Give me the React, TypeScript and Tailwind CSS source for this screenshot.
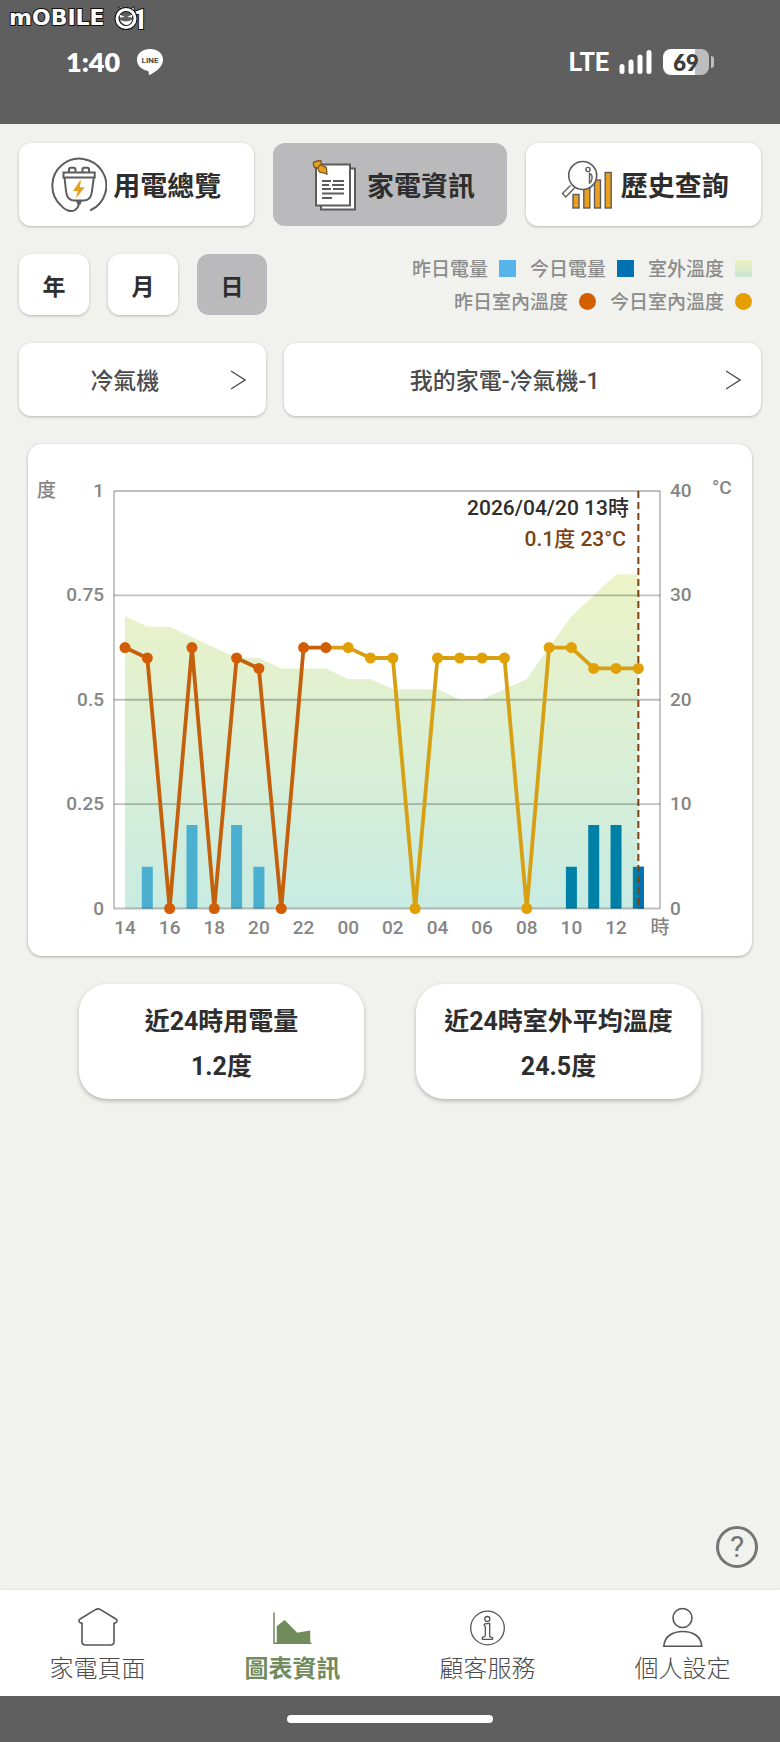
import React, { useState } from "react";
import clsx from "clsx";

const OUTDOOR = [
  28, 27, 27, 26, 25, 24, 24, 23, 23, 23, 22, 22, 21, 21, 21, 20, 20, 21, 22,
  25, 28, 30, 32, 32,
];
const INDOOR = [
  25, 24, 0, 25, 0, 24, 23, 0, 25, 25, 25, 24, 24, 0, 24, 24, 24, 24, 0, 25, 25,
  23, 23, 23,
];
const USAGE = [
  0, 0.1, 0, 0.2, 0, 0.2, 0.1, 0, 0, 0, 0, 0, 0, 0, 0, 0, 0, 0, 0, 0, 0.1, 0.2,
  0.2, 0.1,
];
const HOURS = [
  "14", "16", "18", "20", "22", "00", "02", "04", "06", "08", "10", "12",
];
const AXIS = [
  { kwh: "1", temp: 40 },
  { kwh: "0.75", temp: 30 },
  { kwh: "0.5", temp: 20 },
  { kwh: "0.25", temp: 10 },
  { kwh: "0", temp: 0 },
];

// first index that belongs to today
const TODAY = 10;

const LEFT = 86;
const RIGHT = 632;
const TOP = 47;
const BOTTOM = 464.5;

const px = (i: number) => 97 + i * 22.32;
const py = (temp: number) => BOTTOM - (temp / 40) * (BOTTOM - TOP);

const PlugIcon = () => (
  <svg viewBox="0 0 56 56" className="size-14 shrink-0" fill="none" stroke="#5c5c5c" strokeWidth="2">
    <path d="M40 53A27 27 0 1 0 10 48.500C14 53.500 20 55.500 24 53C27 51 28 48.500 28 45" strokeLinecap="round" />
    <path d="M18 15V12.500Q18 10.800 19.700 10.800H22.800Q24.500 10.800 24.500 12.500V15M31.500 15V12.500Q31.500 10.800 33.200 10.800H36.300Q38 10.800 38 12.500V15" />
    <path d="M12.500 15.500H43.700V20.500H12.500Z" />
    <path d="M13.500 20.500L15 34Q16 43.500 23 43.500H33Q40 43.500 41 34L42.800 20.500" />
    <path d="M25 44H31L29.500 47.500H26.500Z" fill="#5c5c5c" stroke="none" />
    <path d="M29 23.500L22 34H26.800L24.800 41.500L33.800 30.300H28.800L30 23.500Z" fill="#e9a020" stroke="none" />
  </svg>
);

const DocumentIcon = () => (
  <svg viewBox="0 0 56 56" className="size-14 shrink-0" fill="none" stroke="#5c5c5c" strokeWidth="2">
    <path d="M16 49V52.500H50V11.500H45" fill="#fff" />
    <path d="M11 7.500H45V48.500H11Z" fill="#fff" />
    <path d="M17 24H26M28 24H39M17 28H24M27 28H39M17 32H26M28 32H39M17 36.500H39M17 41H27" />
    <path
      d="M8.500 8Q7.500 5 10.500 4.500L14.500 3.500Q17 3.500 16 6L15.800 7.500L19 9.500Q21.800 9.500 21.500 12L22 17L17 15.500Q14 16 13.500 13L12.500 10.800L10.500 10.500Q9 10.500 8.500 8Z"
      fill="#e9a020"
      stroke="#7a5a2a"
      strokeWidth="1.300"
    />
    <path d="M15.800 7.500L12.500 10.800" stroke="#7a5a2a" strokeWidth="1.300" />
  </svg>
);

const HistoryIcon = () => (
  <svg viewBox="0 0 56 56" className="size-14 shrink-0" stroke="#5c5c5c" strokeWidth="1.400">
    <g fill="#e9a020">
      <rect x="14" y="37.500" width="6" height="13.500" />
      <rect x="24.800" y="30" width="6" height="21" />
      <rect x="35.500" y="23" width="6" height="28" />
      <rect x="46.200" y="15.500" width="6" height="35.500" />
    </g>
    <path d="M11.500 28.500L3.500 36.500L6.800 40L15.500 31" fill="#fff" strokeWidth="1.400" />
    <circle cx="23.700" cy="18.500" r="14" fill="#fff" strokeWidth="1.600" />
    <circle cx="29" cy="12.500" r="2.100" fill="none" />
    <path d="M30.500 16.500Q33.500 17.500 33 21.500Q32.500 25 30.500 26Z" fill="none" />
  </svg>
);

const HomeIcon = () => (
  <svg viewBox="0 0 40 40" className="size-10" fill="none" stroke="#555" strokeWidth="1.600" strokeLinejoin="round">
    <path d="M4 16V34.500Q4 38 7.500 38H32.500Q36 38 36 34.500V16H37.500Q40.500 13.500 37.500 11.800L22.500 2.600Q20 1.200 17.500 2.600L2.500 11.800Q-0.500 13.500 2.500 16Z" />
  </svg>
);

const ChartIcon = () => (
  <svg viewBox="0 0 40 40" className="size-10" fill="#718b5c" stroke="#718b5c" strokeWidth="1.500">
    <path d="M1 5.500V36.300H38.500" fill="none" />
    <path d="M4.500 19.500L11.500 14L24 26.500L36.500 24.500V36H4.500Z" />
  </svg>
);

const InfoIcon = () => (
  <svg viewBox="0 0 40 40" className="size-10" fill="none" stroke="#555" strokeWidth="1.300">
    <circle cx="19.500" cy="21" r="16.800" />
    <circle cx="19.300" cy="12" r="2.500" />
    <path d="M16.800 16.800L21.700 16.300V29Q21.700 30.300 24 30.300Q25 30.500 24.500 32.300H14.300Q13.800 30.300 15.700 30Q17.300 29.500 17.300 28.500V19.300Q16.500 19 16 18Z" strokeLinejoin="round" />
  </svg>
);

const PersonIcon = () => (
  <svg viewBox="0 0 40 40" className="size-10" fill="none" stroke="#555" strokeWidth="1.600">
    <circle cx="19.500" cy="11" r="9.500" />
    <path d="M0.800 39.200C1.500 29 10 24.500 19.800 24.500S38 29 38.800 39.200Z" />
  </svg>
);

const Chevron = () => (
  <svg viewBox="0 0 16 20" className="h-5 w-4 shrink-0" fill="none" stroke="#4b4b4b" strokeWidth="1.300">
    <path d="M1 1L15 10L1 19" />
  </svg>
);

const Logo = () => (
  <svg viewBox="0 0 150 40" className="absolute top-0 left-2 h-10 w-[150px]" aria-label="mobile01">
    <g fill="#fff" stroke="#111" strokeWidth="2" paintOrder="stroke">
      <text x="1" y="25" fontSize="22" fontFamily="DejaVu Sans" fontWeight="700">
        mOBILE
      </text>
      <text x="124" y="29" fontSize="28" fontFamily="Roboto" fontWeight="700">
        1
      </text>
    </g>
    <path d="M110 6.500L115 10.500Q118 9 121 10.500L126 6.500Q127 10 125 13" fill="#fff" stroke="#111" />
    <circle cx="118" cy="18.500" r="9" fill="#5f5f5f" stroke="#111" strokeWidth="5" />
    <circle cx="118" cy="18.500" r="9" fill="none" stroke="#fff" strokeWidth="3" />
    <path d="M111.500 14.500L117 17L112 17.500ZM124.500 14.500L119 17L124 17.500ZM112 20Q118 23 124.500 19.500Q122.500 25 118 25Q114 24 112 20Z" fill="#fff" />
  </svg>
);

const StatusBar = () => (
  <header className="relative flex h-[124px] items-center justify-between bg-[#5f5f5f] px-[66px] text-white">
    <Logo />
    <div className="flex items-center gap-4">
      <span className="font-[Lato] text-[27px] leading-8 font-extrabold">1:40</span>
      <svg viewBox="0 0 28 28" className="size-7" fill="#fff">
        <path d="M14 1C6.500 1 1 5.500 1 11.500C1 17.500 5.500 21.800 11 22.600Q13.200 23 12.800 26.500Q13 27.300 14 26.800C20 23.500 27 19 27 11.500C27 5.500 21.500 1 14 1Z" />
        <text x="14" y="15" textAnchor="middle" fontSize="8" fontWeight="700" fontFamily="Roboto" fill="#4a4a4a">
          LINE
        </text>
      </svg>
    </div>
    <div className="flex items-center gap-[10px]">
      <span className="pt-[2px] font-[Roboto] text-[25px] leading-8 font-bold">LTE</span>
      <svg viewBox="0 0 34 26" className="h-[26px] w-[34px]" stroke="#fff" strokeWidth="5" strokeLinecap="round">
        <path d="M3 17.500V22.500M12 13V22.500M21 8V22.500M30 3.500V22.500" />
      </svg>
      <div className="flex items-center gap-[2px]">
        <span className="flex h-[26px] w-[46px] items-center justify-center rounded-lg bg-linear-to-r from-white from-70% to-[#bdbdbd] to-70% font-[Lato] text-[22px] font-extrabold text-[#3d3d3d]">
          69
        </span>
        <span className="h-3 w-[3px] rounded-r-full bg-[#bdbdbd]" />
      </div>
    </div>
  </header>
);

const UsageChart = () => {
  const area = OUTDOOR.map((t, i) => `${px(i)},${py(t)}`).join(" ");
  const points = INDOOR.map((t, i) => `${px(i)},${py(t)}`);

  return (
    <section className="mx-[9px] rounded-[14px] bg-white shadow-[0_1px_3px_rgba(0,0,0,0.3)]">
      <svg
        viewBox="0 0 724 512"
        className="block w-full font-['Roboto','Noto_Sans_CJK_TC',sans-serif] text-[19px] font-medium"
        fill="#858585"
      >
        <defs>
          <linearGradient id="outdoor" x1="0" y1="0" x2="0" y2="1">
            <stop offset="0" stopColor="#edf3c6" />
            <stop offset="1" stopColor="#c8ebe2" />
          </linearGradient>
        </defs>

        <polygon points={`${px(0)},${BOTTOM} ${area} ${px(23)},${BOTTOM}`} fill="url(#outdoor)" />

        {USAGE.map((v, i) =>
          v > 0 ? (
            <rect
              key={i}
              x={px(i) - 5.5}
              y={py(v * 40)}
              width="11"
              height={BOTTOM - py(v * 40)}
              fill={i < TODAY ? "#4bb0cf" : "#0080a6"}
            />
          ) : null
        )}
        <rect x={px(23)} y={py(4)} width="5.5" height={BOTTOM - py(4)} fill="#0072b2" />

        <g stroke="#000" strokeOpacity="0.25" strokeWidth="1.800">
          {AXIS.map(({ temp }) => (
            <path key={temp} d={`M${LEFT} ${py(temp)}H${RIGHT}`} />
          ))}
          <path d={`M${LEFT} ${TOP}V${BOTTOM}M${RIGHT} ${TOP}V${BOTTOM}`} />
        </g>

        <path d={`M${px(23)} ${TOP}V${BOTTOM}`} stroke="#7d4212" strokeWidth="2" strokeDasharray="7 4" />

        <polyline points={points.slice(TODAY - 1).join(" ")} fill="none" stroke="#d6a012" strokeWidth="3.800" />
        <polyline points={points.slice(0, TODAY).join(" ")} fill="none" stroke="#c4600c" strokeWidth="3.800" />
        {INDOOR.map((t, i) => (
          <circle key={i} cx={px(i)} cy={py(t)} r="5.500" fill={i < TODAY ? "#d35d05" : "#e0a006"} />
        ))}

        {AXIS.map(({ kwh, temp }) => (
          <g key={kwh}>
            <text x="76" y={py(temp) + 6} textAnchor="end">
              {kwh}
            </text>
            <text x="642" y={py(temp) + 6}>
              {temp}
            </text>
          </g>
        ))}
        {HOURS.map((hour, i) => (
          <text key={hour} x={px(i * 2)} y="490" textAnchor="middle">
            {hour}
          </text>
        ))}
        <text x={RIGHT} y="490" textAnchor="middle">
          時
        </text>
        <text x="9" y="53">
          度
        </text>
        <text x="684" y="50">
          °C
        </text>

        <g className="text-[21px]" textAnchor="end">
          <text x="601" y="71" fill="#2e2e2e">
            2026/04/20 13時
          </text>
          <text x="598" y="102" fill="#7d4212">
            0.1度 23°C
          </text>
        </g>
      </svg>
    </section>
  );
};

const TABS = [
  { label: "用電總覽", icon: <PlugIcon /> },
  { label: "家電資訊", icon: <DocumentIcon /> },
  { label: "歷史查詢", icon: <HistoryIcon /> },
];

const PERIODS = ["年", "月", "日"];

const LEGEND = [
  [
    { label: "昨日電量", mark: "bg-[#56b4e9]" },
    { label: "今日電量", mark: "bg-[#0072b2]" },
    { label: "室外溫度", mark: "bg-linear-to-b from-[#ecf1bd] to-[#c9e5d4]" },
  ],
  [
    { label: "昨日室內溫度", mark: "rounded-full bg-[#d55e00]" },
    { label: "今日室內溫度", mark: "rounded-full bg-[#e69f00]" },
  ],
];

const SUMMARY = [
  { label: "近24時用電量", value: "1.2度" },
  { label: "近24時室外平均溫度", value: "24.5度" },
];

const NAV = [
  { label: "家電頁面", icon: <HomeIcon /> },
  { label: "圖表資訊", icon: <ChartIcon />, active: true },
  { label: "顧客服務", icon: <InfoIcon /> },
  { label: "個人設定", icon: <PersonIcon /> },
];

const App = () => {
  const [tab, setTab] = useState("家電資訊");
  const [period, setPeriod] = useState("日");

  return (
    <div
      lang="zh-Hant"
      className="flex min-h-screen flex-col bg-[#f1f2ee] font-['Roboto','Noto_Sans_CJK_TC',sans-serif] text-[#2e2e2e]"
    >
      <StatusBar />

      <main className="flex flex-1 flex-col gap-7 px-[19px] pt-[19px] pb-[22px]">
        <div className="grid grid-cols-3 gap-[19px] font-['Noto_Sans_CJK_TC',sans-serif]">
          {TABS.map(({ label, icon }) => (
            <button
              key={label}
              onClick={() => setTab(label)}
              className={clsx(
                "flex h-[83px] items-center justify-center gap-[6px] rounded-xl text-[27px] font-bold",
                tab === label ? "bg-[#bababc]" : "bg-white shadow-[0_1px_3px_rgba(0,0,0,0.25)]"
              )}
            >
              {icon}
              <span className="pt-[2px]">{label}</span>
            </button>
          ))}
        </div>

        <div className="flex items-center justify-between font-['Noto_Sans_CJK_TC',sans-serif]">
          <div className="flex gap-[19px]">
            {PERIODS.map((label) => (
              <button
                key={label}
                onClick={() => setPeriod(label)}
                className={clsx(
                  "h-[61px] w-[70px] rounded-xl pt-[2px] text-[23px] font-bold",
                  period === label ? "bg-[#bababc]" : "bg-white shadow-[0_1px_3px_rgba(0,0,0,0.25)]"
                )}
              >
                {label}
              </button>
            ))}
          </div>
          <div className="mr-[9px] flex flex-col items-end gap-[5px]">
            {LEGEND.map((row, i) => (
              <ul key={i} className="flex gap-[14px]">
                {row.map(({ label, mark }) => (
                  <li key={label} className="flex items-center gap-[11px] text-[19px] leading-7 font-medium text-[#8c8c8c]">
                    {label}
                    <span className={clsx("size-[17px]", mark)} />
                  </li>
                ))}
              </ul>
            ))}
          </div>
        </div>

        <div className="flex gap-[18px] text-[23px] font-medium text-[#4b4b4b]">
          <button className="flex h-[73px] w-1/3 items-center rounded-xl bg-white pr-5 shadow-[0_1px_3px_rgba(0,0,0,0.25)]">
            <span className="flex-1 pt-[6px]">冷氣機</span>
            <Chevron />
          </button>
          <button className="flex h-[73px] flex-1 items-center rounded-xl bg-white pr-5 shadow-[0_1px_3px_rgba(0,0,0,0.25)]">
            <span className="flex-1 pt-[6px]">我的家電-冷氣機-1</span>
            <Chevron />
          </button>
        </div>

        <UsageChart />

        <div className="mx-[60px] grid grid-cols-2 gap-[52px]">
          {SUMMARY.map(({ label, value }) => (
            <div
              key={label}
              className="flex h-[115px] flex-col items-center justify-center rounded-[28px] bg-white pt-1 text-[25px] leading-[45px] font-bold shadow-[0_2px_4px_rgba(0,0,0,0.25)]"
            >
              <p className="whitespace-nowrap">{label}</p>
              <p>{value}</p>
            </div>
          ))}
        </div>

        <button
          aria-label="說明"
          className="mt-auto mr-[3px] flex size-[42px] items-center justify-center self-end rounded-full border-3 border-[#757575] text-[30px] leading-none text-[#757575]"
        >
          ?
        </button>
      </main>

      <nav className="grid h-[106px] grid-cols-4 bg-white font-['Noto_Sans_CJK_TC',sans-serif] shadow-[0_-1px_2px_rgba(0,0,0,0.06)]">
        {NAV.map(({ label, icon, active }) => (
          <a
            key={label}
            href="#"
            className={clsx(
              "flex flex-col items-center gap-1 pt-[17px] text-[24px] leading-8",
              active ? "font-bold text-[#718b5c]" : "font-light text-[#4b4b4b]"
            )}
          >
            {icon}
            {label}
          </a>
        ))}
      </nav>
      <footer className="flex h-[46px] items-center justify-center bg-[#5f5f5f]">
        <span className="h-2 w-[206px] rounded-full bg-white" />
      </footer>
    </div>
  );
};

export default App;
